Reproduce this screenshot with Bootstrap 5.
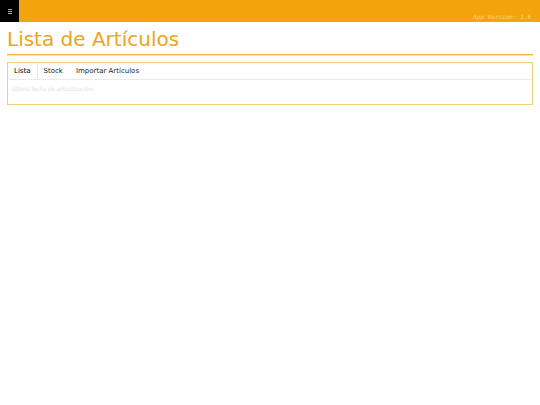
<!DOCTYPE html>
<html lang="es">
<head>
<meta charset="utf-8">
<meta name="viewport" content="width=device-width, initial-scale=1">
<title>Lista de Artículos</title>
<link rel="stylesheet" href="https://cdn.jsdelivr.net/npm/bootstrap@5.3.0/dist/css/bootstrap.min.css">
<style>
body { font-family: "DejaVu Sans", sans-serif; font-size: 7px; line-height: 10px; background: #fff; }
.topbar { background: #f3a40c; min-height: 22px; }
.menu-toggle { width: 19px; background: #000; border: 0; }
.menu-toggle svg { width: 4px; height: 5px; }
.app-version { font: italic 6px/10px "DejaVu Sans Mono", monospace; color: #fbd58c; padding-right: 9px; }
.page { padding: 0 7px; }
.page-title { color: #efa41c; font-size: 20px; line-height: 24px; font-weight: 400; padding: 5px 0 3px; border-bottom: 1px solid #f2b040; box-shadow: 0 1px #fbe3b5; }
.panel { border: 1px solid #f0cf85; margin-top: 7px; }
.panel .nav-tabs { --bs-nav-tabs-border-radius: 0; --bs-nav-tabs-border-color: #e8eaec; --bs-nav-tabs-link-active-border-color: #e8eaec; }
.panel .nav-link { color: #212529; font-size: 7px; line-height: 10px; padding: 2px 6px 3px 5px; }
.panel .nav-link.active { border-top-color: transparent; border-left-color: transparent; }
.panel-body { padding: 4px 4px 10px; }
.last-update { font-family: "DejaVu Sans Condensed", "DejaVu Sans", sans-serif; font-style: italic; font-size: 6px; line-height: 10px; color: #dfe0e2; }
</style>
<script src="https://cdn.jsdelivr.net/npm/bootstrap@5.3.0/dist/js/bootstrap.bundle.min.js"></script>
</head>
<body>
<header class="topbar d-flex justify-content-between align-items-stretch">
  <button class="menu-toggle d-flex align-items-center justify-content-center p-0" type="button" aria-label="Menú">
    <svg viewBox="0 0 4 5" stroke="#aaa" stroke-width="1" aria-hidden="true"><path d="M0 .5h4M0 2.5h4M0 4.5h4"/></svg>
  </button>
  <span class="app-version align-self-end">App Version: 1.6</span>
</header>
<main class="page">
  <h1 class="page-title mb-0">Lista de Artículos</h1>
  <section class="panel">
    <ul class="nav nav-tabs" role="tablist">
      <li class="nav-item" role="presentation"><button class="nav-link active" id="tab-lista" type="button" role="tab" data-bs-toggle="tab" data-bs-target="#lista" aria-controls="lista" aria-selected="true">Lista</button></li>
      <li class="nav-item" role="presentation"><button class="nav-link" id="tab-stock" type="button" role="tab" data-bs-toggle="tab" data-bs-target="#stock" aria-controls="stock" aria-selected="false">Stock</button></li>
      <li class="nav-item" role="presentation"><button class="nav-link" id="tab-importar" type="button" role="tab" data-bs-toggle="tab" data-bs-target="#importar" aria-controls="importar" aria-selected="false">Importar Artículos</button></li>
    </ul>
    <div class="tab-content panel-body">
      <div class="tab-pane active" id="lista" role="tabpanel" aria-labelledby="tab-lista"><p class="last-update mb-0">Última fecha de actualización:</p></div>
      <div class="tab-pane" id="stock" role="tabpanel" aria-labelledby="tab-stock"></div>
      <div class="tab-pane" id="importar" role="tabpanel" aria-labelledby="tab-importar"></div>
    </div>
  </section>
</main>
</body>
</html>
